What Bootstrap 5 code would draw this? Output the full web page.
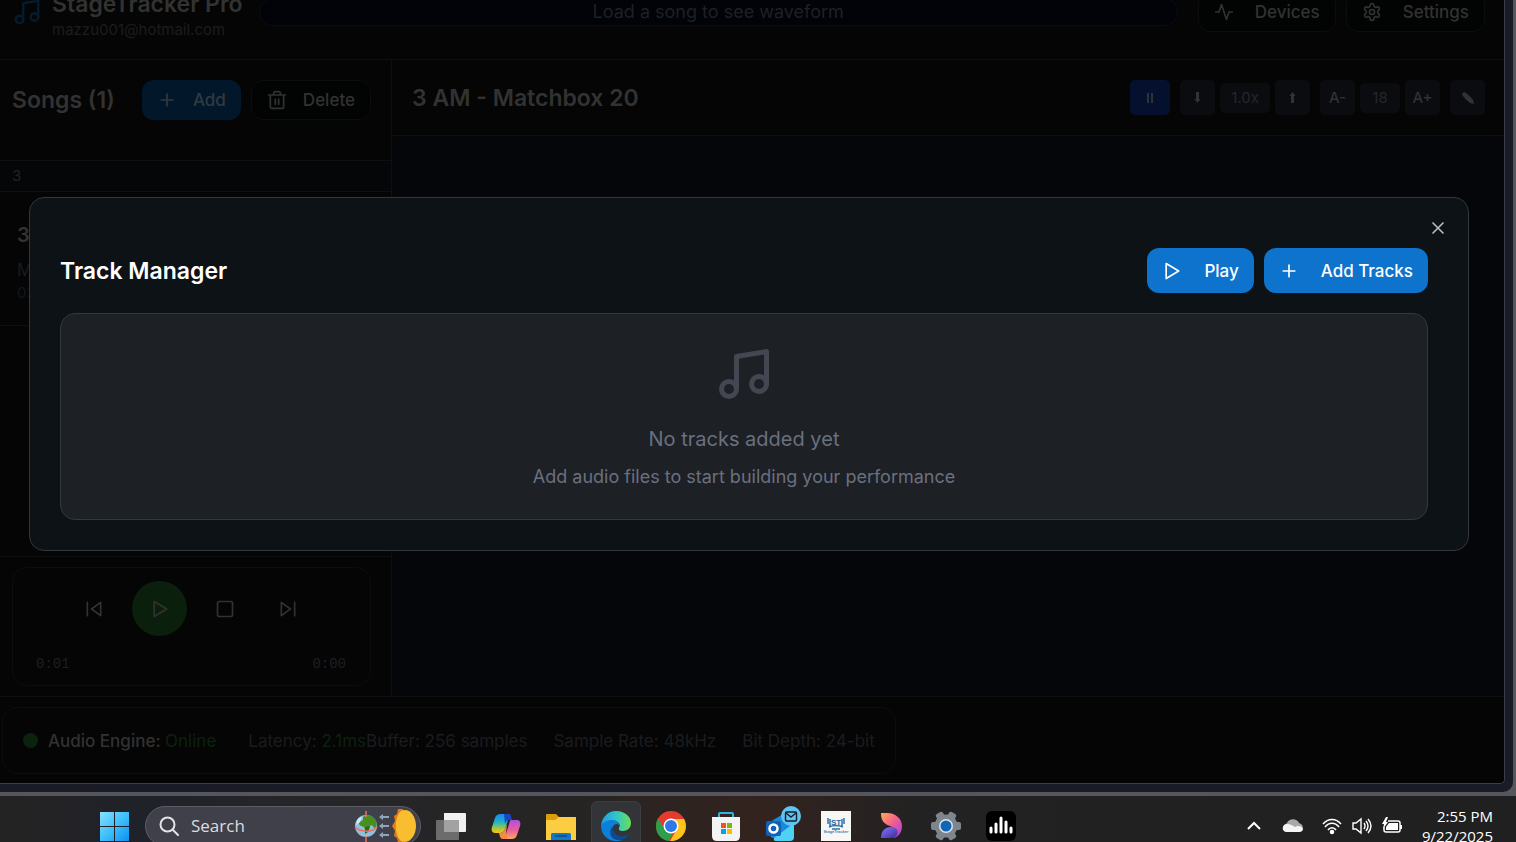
<!DOCTYPE html>
<html lang="en">
<head>
<meta charset="utf-8">
<meta name="viewport" content="width=device-width, initial-scale=1">
<title>StageTracker Pro</title>
<link href="https://cdn.jsdelivr.net/npm/bootstrap@5.3.0/dist/css/bootstrap.min.css" rel="stylesheet">
<style>
  body { font-family: Inter, "Liberation Sans", sans-serif; font-size: 18px; line-height: 24px; background: #55565b; color: #323232; }
  h1, h2, p { margin: 0; }
  svg { display: block; flex: none; }
  .line-icon { width: 20px; height: 20px; fill: none; stroke: currentColor; stroke-width: 2; stroke-linecap: round; stroke-linejoin: round; }
  .heading { font-size: 23px; line-height: 32px; font-weight: 600; }
  .gap-s { gap: 5px; }
  .gap-m { gap: 10px; }

  /* browser window */
  .browser { background: #191b26; padding: 0 8px 8px 0; margin: 0 3px 4px 0; border-radius: 0 0 10px 0; min-height: 0; }
  .app { background: #050505; border: solid #3c3d47; border-width: 0 1px 1px 0; border-radius: 0 0 5px 0; }
  .rule-b { border-bottom: 1px solid #0e0f11; }
  .rule-t { border-top: 1px solid #0e0f11; }

  /* the top bar is scrolled partly out of view */
  .topbar { height: 98px; margin-top: -38px; padding: 2px 19px 0 12px; gap: 16px; flex: none; }
  .brand-icon { width: 30px; height: 30px; color: #031b2d; }
  .mail { font-size: 15px; line-height: 20px; color: #1c1d1f; }
  .wave { height: 28px; border: 1px solid #0b0d12; background: #020308; color: #1e2024; border-radius: 14px; }
  .act { font-size: 17px; font-weight: 500; line-height: 24px; height: 40px; padding: 0 15px; border-radius: 12px; gap: 16px; border: 0; display: inline-flex; align-items: center; white-space: nowrap; }
  .act-dark, .act-dark:hover { background: #020303; color: #323232; border: 1px solid #0b0d0f; }
  .act-add, .act-add:hover { background: #02182a; color: #323a40; }
  .act-wide { gap: 21px; }
  .act-blue, .act-blue:hover { background: #0d73cc; color: #fff; height: 45px; gap: 22px; }

  .side { width: 392px; flex: none; border-right: 1px solid #0e0f11; }
  .side-head { height: 101px; padding: 20px 20px 0 12px; }
  .group-row { height: 31px; padding: 0 12px; background: #050608; font-size: 15px; line-height: 30px; color: #222326; }
  .song { padding: 30px 17px 0; height: 134px; }
  .song-name { font-size: 20px; line-height: 26px; font-weight: 600; }
  .song-by { font-size: 17px; line-height: 24px; margin-top: 10px; color: #1a1b1d; }
  .song-len { font-size: 15px; line-height: 22px; color: #151617; }
  .transport { padding: 10px 20px 10px 12px; }
  .panel { border: 1px solid #0c0d0f; border-radius: 15px; }
  .deck { height: 119px; padding: 13px 24px 0 23px; }
  .deck-row { gap: 13px; }
  .deck-btn { width: 50px; height: 40px; padding: 0; border: 0; background: none; color: #323232; display: grid; place-items: center; }
  .deck-play { width: 55px; height: 55px; border-radius: 50%; background: #0b200c; }
  .times { font-family: "Liberation Mono", monospace; font-size: 14px; line-height: 20px; margin-top: 18px; color: #1e1f22; }

  .tools { height: 76px; padding: 0 19px 0 20px; }
  .tool { width: 35px; height: 35px; border: 0; padding: 0; border-radius: 5px; background: #0b0c10; color: #303237; font-size: 15px; line-height: 20px; font-weight: 500; display: grid; place-items: center; }
  .tool-on { width: 40px; background: #04102e; }
  .tool-val { width: 40px; height: 30px; color: #25272b; font-weight: 400; }
  .tool-speed { width: 50px; }
  .stage { background: #05060a; border-radius: 6px; }

  .statusbar { padding: 10px 2px 9px; }
  .status { height: 67px; padding: 0 20px; color: #1b1c1f; font-size: 17px; gap: 26px; white-space: nowrap; }
  .status-main { color: #323232; font-weight: 500; margin-right: 6px; }
  .dot { width: 15px; height: 15px; border-radius: 50%; background: #0b230d; }
  .ok { color: #0b230d; }

  /* dialog over the app */
  .overlay { position: absolute; inset: 0; padding: 197px 35px 0 29px; }
  .dialog { position: relative; background: #0d1216; border: 1px solid #34373c; border-radius: 15px; padding: 50px 40px 30px 30px; color: #fff; }
  .close-x { position: absolute; top: 20px; right: 20px; width: 20px; height: 20px; padding: 0; border: 0; background: none; color: #b9bbbd; }
  .empty { background: #1d2024; border: 1px solid #34373c; border-radius: 15px; margin-top: 20px; padding: 30px 20px 29px; color: #6a7080; }
  .empty-icon { width: 60px; height: 60px; color: #444752; }
  .empty-title { font-size: 20px; line-height: 30px; margin-top: 20px; }
  .empty-note { font-size: 18px; line-height: 26px; margin-top: 10px; }

  /* taskbar */
  .taskbar { height: 46px; background: linear-gradient(90deg, #242323 0, #20222a 10%, #252529 18%, #262423 38%, #33231e 50%, #232222 60%, #202020 100%); overflow: hidden; font-family: "Open Sans", "Noto Sans", sans-serif; color: #fff; }
  .task-row { height: 60px; padding: 0 23px 0 90px; gap: 5px; }
  .task { width: 50px; height: 50px; border: 0; padding: 0; background: none; display: grid; place-items: center; border-radius: 6px; }
  .task-on { background: #333437; border: 1px solid #3d3e41; }
  .find { width: 276px; height: 40px; border-radius: 20px; background: #3f4049; border: 1px solid #5c5d64; padding: 0 3px 0 13px; gap: 12px; }
  .find input { flex: 1; min-width: 0; border: 0; padding: 0; background: none; color: #dcdcdf; font-size: 17px; line-height: 24px; outline: 0; }
  .find input::placeholder { color: #dcdcdf; opacity: 1; }
  .tray { gap: 10px; }
  .clock { font-size: 15px; line-height: 20px; margin-left: 10px; }
</style>
</head>
<body class="vh-100 d-flex flex-column overflow-hidden">
<svg width="0" height="0" class="position-absolute" aria-hidden="true">
  <symbol id="music" viewBox="0 0 24 24"><path d="M9 18V5l12-2v13"/><circle cx="6" cy="18" r="3"/><circle cx="18" cy="16" r="3"/></symbol>
  <symbol id="plus" viewBox="0 0 24 24"><path d="M5 12h14M12 5v14"/></symbol>
  <symbol id="play" viewBox="0 0 24 24"><path d="M5 3l15 9-15 9z"/></symbol>
</svg>

<div class="browser flex-grow-1 d-flex">
  <div class="app position-relative flex-grow-1 d-flex flex-column overflow-hidden">
    <header class="topbar rule-b d-flex align-items-center">
      <div class="d-flex align-items-center gap-m">
        <svg class="line-icon brand-icon"><use href="#music"/></svg>
        <div class="pt-1">
          <h1 class="heading text-nowrap">StageTracker Pro</h1>
          <div class="mail">mazzu001@hotmail.com</div>
        </div>
      </div>
      <div class="wave flex-grow-1 d-flex align-items-center justify-content-center">Load a song to see waveform</div>
      <div class="d-flex gap-m ms-1">
        <button class="btn act act-dark act-wide" type="button"><svg class="line-icon" viewBox="0 0 24 24"><path d="M22 12h-4l-3 9L9 3l-3 9H2"/></svg>Devices</button>
        <button class="btn act act-dark act-wide" type="button"><svg class="line-icon" viewBox="0 0 24 24"><path d="M12.2 2h-.4a2 2 0 0 0-2 2v.2a2 2 0 0 1-1 1.7l-.4.3a2 2 0 0 1-2 0l-.2-.1a2 2 0 0 0-2.700.7l-.2.4a2 2 0 0 0 .7 2.700l.2.1a2 2 0 0 1 1 1.700v.5a2 2 0 0 1-1 1.800l-.2.1a2 2 0 0 0-.7 2.700l.2.4a2 2 0 0 0 2.700.7l.2-.1a2 2 0 0 1 2 0l.4.3a2 2 0 0 1 1 1.700v.2a2 2 0 0 0 2 2h.4a2 2 0 0 0 2-2v-.2a2 2 0 0 1 1-1.700l.4-.3a2 2 0 0 1 2 0l.2.1a2 2 0 0 0 2.700-.7l.2-.4a2 2 0 0 0-.7-2.700l-.2-.1a2 2 0 0 1-1-1.800v-.5a2 2 0 0 1 1-1.700l.2-.1a2 2 0 0 0 .7-2.700l-.2-.4a2 2 0 0 0-2.700-.7l-.2.1a2 2 0 0 1-2 0l-.4-.3a2 2 0 0 1-1-1.700V4a2 2 0 0 0-2-2z"/><circle cx="12" cy="12" r="3"/></svg>Settings</button>
      </div>
    </header>

    <div class="flex-grow-1 d-flex">
      <aside class="side d-flex flex-column">
        <div class="side-head rule-b">
          <div class="d-flex align-items-center">
            <h2 class="heading me-auto">Songs (1)</h2>
            <div class="d-flex gap-m">
              <button class="btn act act-add" type="button"><svg class="line-icon"><use href="#plus"/></svg>Add</button>
              <button class="btn act act-dark" type="button"><svg class="line-icon" viewBox="0 0 24 24"><path d="M2 6h20M4 6v14c0 1 1 2 2 2h12c1 0 2-1 2-2V6M8 6V4c0-1 1-2 2-2h4c1 0 2 1 2 2v2M10 11v6M14 11v6"/></svg>Delete</button>
            </div>
          </div>
        </div>
        <div class="group-row rule-b">3</div>
        <div class="song rule-b">
          <div class="song-name">3 AM</div>
          <div class="song-by">Matchbox 20</div>
          <div class="song-len">03:</div>
        </div>
        <div class="transport rule-t mt-auto">
          <div class="panel deck">
            <div class="deck-row d-flex align-items-center justify-content-center">
              <button class="deck-btn" type="button" aria-label="Previous"><svg class="line-icon" viewBox="0 0 24 24"><path d="M20 20L9 12l11-8zM4 20V4"/></svg></button>
              <button class="deck-btn deck-play" type="button" aria-label="Play"><svg class="line-icon"><use href="#play"/></svg></button>
              <button class="deck-btn" type="button" aria-label="Stop"><svg class="line-icon" viewBox="0 0 24 24"><rect x="3" y="3" width="18" height="18" rx="2"/></svg></button>
              <button class="deck-btn" type="button" aria-label="Next"><svg class="line-icon" viewBox="0 0 24 24"><path d="M4 4l11 8-11 8zM20 4v16"/></svg></button>
            </div>
            <div class="times d-flex justify-content-between"><span>0:01</span><span>0:00</span></div>
          </div>
        </div>
      </aside>

      <main class="flex-grow-1 d-flex flex-column">
        <div class="tools rule-b d-flex align-items-center">
          <h2 class="heading me-auto">3 AM - Matchbox 20</h2>
          <div class="d-flex align-items-center gap-m">
            <button class="tool tool-on" type="button" aria-label="Pause"><svg width="8" height="12" viewBox="0 0 8 12" fill="currentColor"><path d="M1 1h2v10H1zM5 1h2v10H5z"/></svg></button>
            <div class="d-flex align-items-center gap-s">
              <button class="tool" type="button" aria-label="Slower"><svg width="7" height="13" viewBox="0 0 7 13" fill="currentColor"><path d="M2 1h3v7h1.500L3.500 12 .5 8H2z"/></svg></button>
              <span class="tool tool-val tool-speed">1.0x</span>
              <button class="tool" type="button" aria-label="Faster"><svg width="7" height="13" viewBox="0 0 7 13" fill="currentColor"><path d="M2 12h3V5h1.500L3.500 1 .5 5H2z"/></svg></button>
            </div>
            <div class="d-flex align-items-center gap-s">
              <button class="tool" type="button">A-</button>
              <span class="tool tool-val">18</span>
              <button class="tool" type="button">A+</button>
            </div>
            <button class="tool" type="button" aria-label="Edit"><svg width="14" height="14" viewBox="0 0 14 14" fill="currentColor"><path d="M1 3l2-2c1-.5 8 6 9 8l1 4-4-1C7 11 .5 4 1 3z"/></svg></button>
          </div>
        </div>
        <div class="stage flex-grow-1"></div>
      </main>
    </div>

    <footer class="statusbar rule-t">
      <div class="panel status d-inline-flex align-items-center">
        <div class="status-main d-flex align-items-center gap-m"><span class="dot"></span><span>Audio Engine: <span class="ok fw-normal">Online</span></span></div>
        <div><span>Latency: <span class="ok">2.1ms</span></span><span>Buffer: 256 samples</span></div>
        <span>Sample Rate: 48kHz</span>
        <span>Bit Depth: 24-bit</span>
      </div>
    </footer>

    <div class="overlay">
      <section class="dialog" role="dialog" aria-labelledby="tm-title">
        <button class="close-x" type="button" aria-label="Close"><svg class="line-icon" viewBox="0 0 24 24"><path d="M18 6L6 18M6 6l12 12"/></svg></button>
        <div class="d-flex align-items-center">
          <h2 class="heading me-auto" id="tm-title">Track Manager</h2>
          <div class="d-flex gap-m">
            <button class="btn act act-blue" type="button"><svg class="line-icon"><use href="#play"/></svg>Play</button>
            <button class="btn act act-blue" type="button"><svg class="line-icon"><use href="#plus"/></svg>Add Tracks</button>
          </div>
        </div>
        <div class="empty d-flex flex-column align-items-center">
          <svg class="line-icon empty-icon"><use href="#music"/></svg>
          <p class="empty-title">No tracks added yet</p>
          <p class="empty-note">Add audio files to start building your performance</p>
        </div>
      </section>
    </div>
  </div>
</div>

<nav class="taskbar flex-shrink-0">
  <div class="task-row d-flex align-items-center">
    <button class="task" type="button" aria-label="Start"><svg width="30" height="30" viewBox="0 0 30 30"><defs><linearGradient id="win" gradientUnits="userSpaceOnUse" x1="0" y1="0" x2="30" y2="30"><stop stop-color="#8be0ff"/><stop offset=".5" stop-color="#3fc0fa"/><stop offset="1" stop-color="#0a8ff2"/></linearGradient></defs><path fill="url(#win)" d="M0 1h14v14H0zM15 1h14v14H15zM0 16h14v14H0zM15 16h14v14H15z"/></svg></button>
    <label class="find d-flex align-items-center">
      <svg width="20" height="20" viewBox="0 0 20 20" fill="none" stroke="#e4e4e6" stroke-width="2" stroke-linecap="round"><circle cx="8.500" cy="8.500" r="7"/><path d="M14 14l5 5"/></svg>
      <input type="text" placeholder="Search" aria-label="Search">
      <svg width="64" height="36" viewBox="0 0 64 36"><circle cx="13" cy="18" r="11" fill="#94bede"/><path d="M10 9c4-3 10-2 13 4 1 3 1 5-1 7-2 0-2-3-4-3-2 2-1 5-4 7-2 0-2-3-3-5-2-1-5-1-5-4 1-2 3-2 4-3z" fill="#479020"/><path d="M4 13c1-3 3-4 5-4l-2 5-4 3z" fill="#d7e8f2"/><path d="M12 19l5-1-2 6-3 2z" fill="#2c6a1c"/><path d="M13 3v6M13 28v6M2 19c5 5 17 6 22 0" fill="none" stroke="#ef7059" stroke-width="1.500"/><path d="M26 9l4-3v2h6v2h-6v2zM26 18l4-3v2h6v2h-6v2zM26 27l4-3v2h6v2h-6v2z" fill="#91a5ba"/><path d="M50 1h-5l-1 5-3 2 1 5-3 5 3 5-1 5 3 2 1 5h5z" fill="#e57918"/><path d="M48 3c8-4 15 5 15 15s-7 19-15 15c-7-6-7-24 0-30z" fill="#f9be30"/></svg>
    </label>
    <button class="task" type="button" aria-label="Task view"><svg width="30" height="30" viewBox="0 0 30 30"><path d="M8 2h21a1 1 0 0 1 1 1v17a1 1 0 0 1-1 1H8z" fill="#f0f0f0"/><rect y="9" width="23" height="20" rx="1" fill="#6c6c6c"/><path d="M8 9h15v12H8z" fill="#a2a2a2"/></svg></button>
    <button class="task" type="button" aria-label="Copilot"><svg width="30" height="30" viewBox="0 0 30 30"><defs><linearGradient id="cpa" x2="0" y2="1"><stop stop-color="#1a87e8"/><stop offset=".45" stop-color="#23b5c8"/><stop offset=".75" stop-color="#a5c83a"/><stop offset="1" stop-color="#f9c315"/></linearGradient><linearGradient id="cpb" x2="0" y2="1"><stop stop-color="#a953e2"/><stop offset=".5" stop-color="#e85ba1"/><stop offset="1" stop-color="#ffa45c"/></linearGradient></defs><path d="M9 3h10l-5 15c-1 3-3 4-5 4H4c-3 0-4-3-3-6l3-9c1-3 3-4 5-4z" fill="url(#cpa)"/><path d="M20 9h6c3 0 4 3 3 6l-3 9c-1 3-3 4-5 4H11c2-1 3-2 4-5l3-10c1-3 1-4 2-4z" fill="url(#cpb)"/><path d="M13 3h4c3 0 3 2 4 6h-3c-2 0-3 1-4 4z" fill="#1647c4"/><path d="M16 28h-4c-3 0-3-3-4-6 3 0 5-1 6-4l2-5-1 9z" fill="#f28b43"/></svg></button>
    <button class="task" type="button" aria-label="File Explorer"><svg width="30" height="30" viewBox="0 0 30 30"><path d="M0 4c0-1 1-1 1-1h9l3 3h16v6H0z" fill="#dc9b0a"/><path d="M0 9h9l4-3h16c1 0 1 0 1 1v22H0z" fill="#fccc42"/><path d="M5 29v-5c0-2 1-2 2-2h16c2 0 2 1 2 2v5z" fill="#0f78c8"/><path d="M9 25h12" stroke="#0a4a86" stroke-width="1.500"/></svg></button>
    <button class="task task-on" type="button" aria-label="Edge"><svg width="30" height="30" viewBox="0 0 30 30"><defs><linearGradient id="edg" x1="0" x2="1"><stop stop-color="#1aa0e0"/><stop offset=".5" stop-color="#30c5cb"/><stop offset="1" stop-color="#69e056"/></linearGradient></defs><path d="M0 15C1 6 7 0 15 0c9 0 15 6 15 12 0 5-4 8-8 8-3 0-5-1-4-3 2-3 0-7-5-7C7 10 2 12 0 15z" fill="url(#edg)"/><path d="M0 15c2-4 6-6 11-6 4 0 7 2 7 5-2-2-5-1-6 2-2 6 3 13 9 13-2 1-4 1-6 1C6 30 0 23 0 15z" fill="#0d7fd8"/><path d="M12 15c-1 5 3 10 9 10 3 0 5-1 7-2-3 5-8 7-12 6-7-1-9-9-4-14z" fill="#11498f"/></svg></button>
    <button class="task" type="button" aria-label="Chrome"><svg width="30" height="30" viewBox="0 0 30 30"><circle cx="15" cy="15" r="15" fill="#e33b2e"/><path d="M2 7.500L9 19l7 4-3 7C2 29-3 17 2 7.500z" fill="#2b9f49"/><path d="M15 8h13c6 11-3 23-14 22l7-12z" fill="#fcc31e"/><circle cx="15" cy="15" r="7.500" fill="#fff"/><circle cx="15" cy="15" r="6" fill="#2f78ec"/></svg></button>
    <button class="task" type="button" aria-label="Store"><svg width="30" height="30" viewBox="0 0 30 30"><path d="M8 7V3q0-1 1-1h12q1 0 1 1v4" fill="none" stroke="#2bb3e8" stroke-width="2"/><path d="M1 6h28v19q0 5-5 5H6q-5 0-5-5z" fill="#f3f3f3"/><path d="M10 12h5v5h-5z" fill="#f25022"/><path d="M16 12h5v5h-5z" fill="#7fba00"/><path d="M10 18h5v5h-5z" fill="#00a4ef"/><path d="M16 18h5v5h-5z" fill="#ffb900"/></svg></button>
    <button class="task" type="button" aria-label="Outlook"><svg width="40" height="42" viewBox="0 0 40 42"><path d="M9 17L22 9l9 9v12q0 3-3 3H13q-4 0-4-4z" fill="#1789d8"/><path d="M13 33l20-15v14q0 4-4 4H15q-3 0-2-3z" fill="#4fd1f5"/><rect x="5" y="16" width="15" height="15" rx="2" fill="#0f62b8"/><circle cx="12.500" cy="23.500" r="4" fill="none" stroke="#fff" stroke-width="2.500"/><circle cx="30" cy="11" r="10" fill="#62c3f3"/><rect x="24.500" y="7" width="11" height="9" rx="1" fill="none" stroke="#10212c" stroke-width="1.400"/><path d="M25 8l5 4 5-4" fill="none" stroke="#10212c" stroke-width="1.400"/></svg></button>
    <button class="task" type="button" aria-label="StageTracker"><svg width="30" height="30" viewBox="0 0 30 30"><path fill="#f7f7f5" d="M0 0h30v30H0z"/><path d="M7 7v6M9 8v8M21 8v8M23 7v6M8 16q7-3 14 0M11 18h8" stroke="#2a74a8" stroke-width="1.500" fill="none"/><text x="15" y="14" text-anchor="middle" font-family="Liberation Sans" font-weight="700" font-size="8" fill="#2469a0">ST</text><text x="15" y="22" text-anchor="middle" font-family="Liberation Sans" font-weight="700" font-size="4" fill="#3d83b4">StageTracker</text></svg></button>
    <button class="task" type="button" aria-label="Dashboard"><svg width="30" height="30" viewBox="0 0 30 30"><defs><linearGradient id="dsa" x2="1" y2="1"><stop stop-color="#ffad55"/><stop offset=".45" stop-color="#f4628a"/><stop offset="1" stop-color="#a33be8"/></linearGradient><linearGradient id="dsb" x2="1" y2="1"><stop stop-color="#8a79ff"/><stop offset="1" stop-color="#3a2a95"/></linearGradient></defs><path d="M5 2h6c9 0 15 6 15 13 0 6-3 10-8 12 3-7 1-10-4-12-6-2-9-5-9-13z" fill="url(#dsa)"/><path d="M5 27c0-7 4-11 10-11 5 0 8 3 6 8-1 2-4 3-8 3z" fill="url(#dsb)"/></svg></button>
    <button class="task" type="button" aria-label="Settings"><svg width="30" height="30" viewBox="0 0 30 30"><g fill="#7d858d"><circle cx="15" cy="15" r="11.500"/><g id="teeth"><rect x="11" y="0" width="8" height="30" rx="2" transform="rotate(30 15 15)"/><rect x="11" y="0" width="8" height="30" rx="2" transform="rotate(90 15 15)"/><rect x="11" y="0" width="8" height="30" rx="2" transform="rotate(150 15 15)"/></g></g><circle cx="15" cy="15" r="7" fill="#dfe5ea"/><circle cx="15" cy="15" r="5.500" fill="#1166b8"/></svg></button>
    <button class="task" type="button" aria-label="Audio levels"><svg width="30" height="30" viewBox="0 0 30 30"><rect width="30" height="30" rx="6"/><path d="M5 17v4M10 13v8M15 7v14M20 11v10M25 17v4" stroke="#fff" stroke-width="3" stroke-linecap="round"/></svg></button>

    <div class="tray d-flex align-items-center ms-auto">
      <svg width="20" height="20" viewBox="0 0 20 20" fill="none" stroke="#fff" stroke-width="2"><path d="M4 13l6-6 6 6"/></svg>
      <svg class="mx-2" width="22" height="20" viewBox="0 0 22 20"><path d="M5 16a5 5 0 0 1 0-9c2-5 10-5 12 0 5 1 5 8 1 9z" fill="#a9a9a9"/><path d="M4 16c-5-1-4-8 1-8 4 0 6 2 8 3 3-2 7-1 8 2 0 2-2 3-4 3z" fill="#f4f4f4"/></svg>
      <svg width="20" height="20" viewBox="0 0 20 20" fill="none" stroke="#fff" stroke-width="1.500"><path d="M1 8c5-6 13-6 18 0M3 11c4-5 10-5 14 0M6 14c2-3 6-3 8 0"/><circle cx="10" cy="16" r="1.500" fill="#fff"/></svg>
      <svg width="20" height="20" viewBox="0 0 20 20" fill="none" stroke="#fff" stroke-width="1.400"><path d="M1 7h3l5-4v14l-5-4H1zM12 7q2 3 0 6M14 5q4 5 0 10M16 3q6 7 0 14"/></svg>
      <svg width="20" height="20" viewBox="0 0 20 20"><path d="M6 5h10q2 0 2 2v7q0 2-2 2H4q-2 0-2-2v-3" fill="none" stroke="#fff" stroke-width="1.500"/><path d="M7 7h9v7H4v-3zM18 9h2v4h-2zM4 1L0 8h2l-1 5 5-7H4l2-5z" fill="#fff"/></svg>
      <div class="clock text-end">2:55 PM<br>9/22/2025</div>
    </div>
  </div>
</nav>
<script src="https://cdn.jsdelivr.net/npm/bootstrap@5.3.0/dist/js/bootstrap.bundle.min.js"></script>
</body>
</html>
